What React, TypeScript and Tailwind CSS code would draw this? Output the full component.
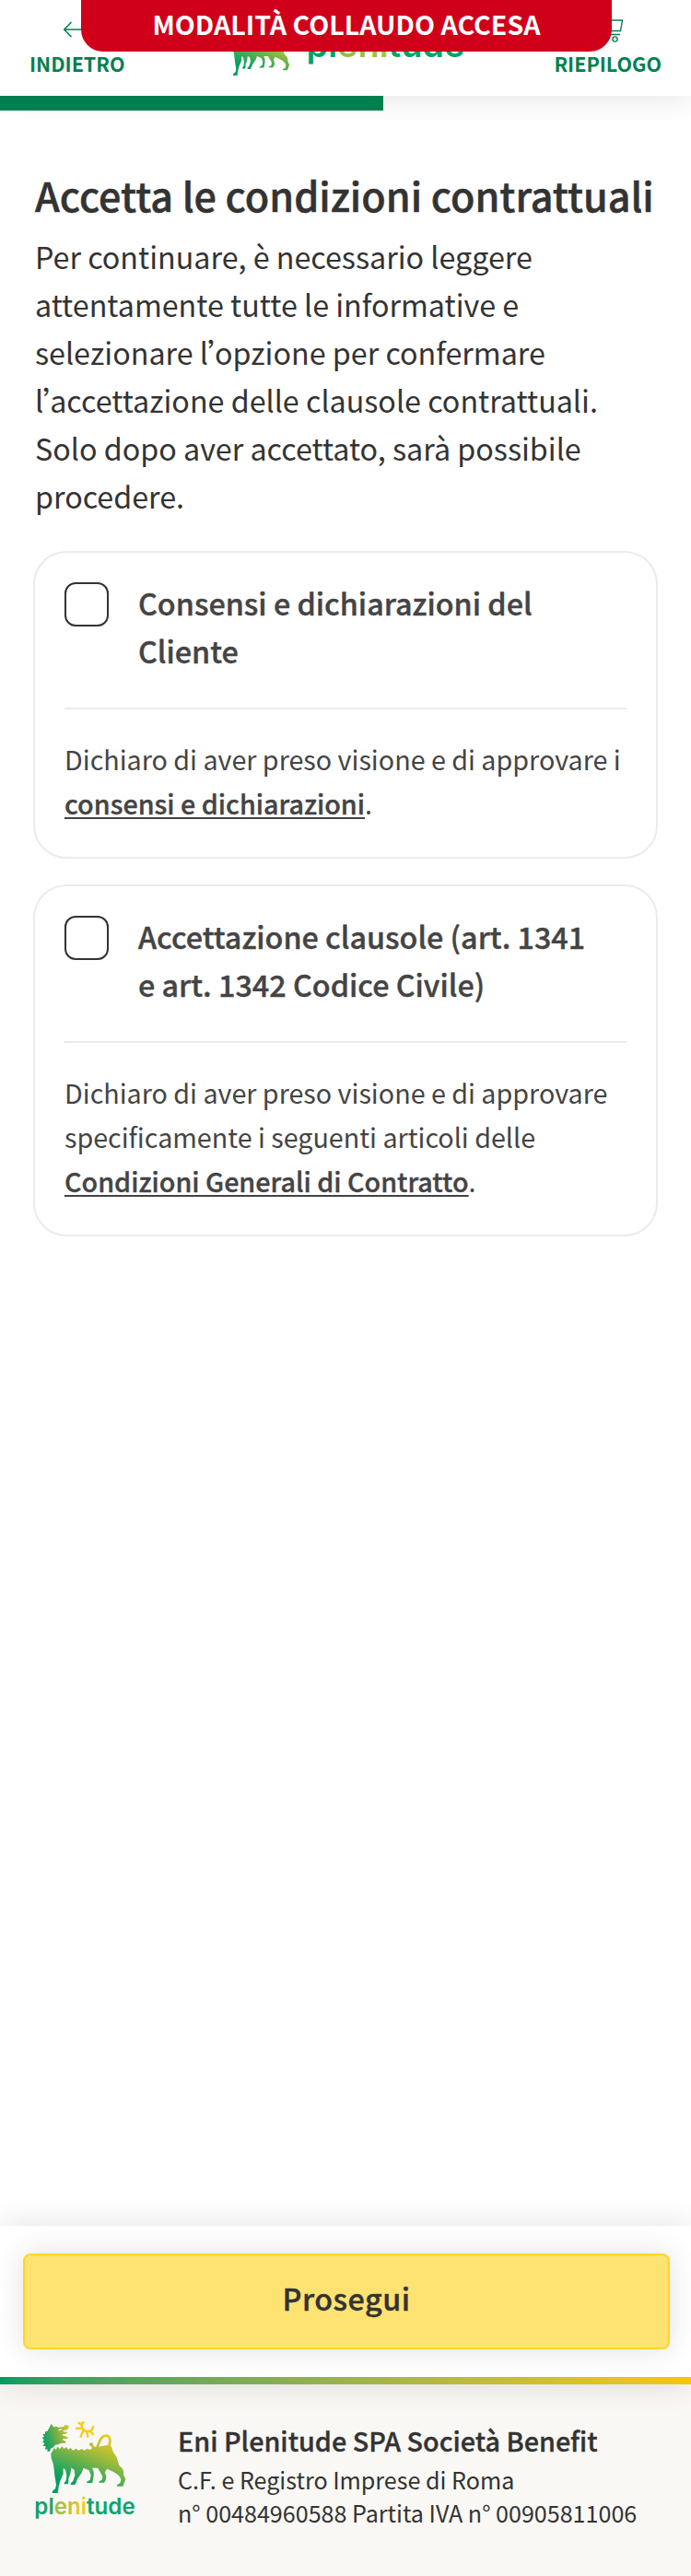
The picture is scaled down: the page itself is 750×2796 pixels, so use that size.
import type { ReactNode } from "react";

function Dog({ id, eye }: { id: string; eye: string }) {
  return (
    <>
      <defs>
        <linearGradient id={id} gradientUnits="userSpaceOnUse" x1="150" y1="250" x2="225" y2="70">
          <stop offset="0" stopColor="#009f64" />
          <stop offset="0.28" stopColor="#45ab55" />
          <stop offset="0.62" stopColor="#a3bb3c" />
          <stop offset="1" stopColor="#f3cb1c" />
        </linearGradient>
        <linearGradient id={id + "-head"} gradientUnits="userSpaceOnUse" x1="88" y1="115" x2="165" y2="90">
          <stop offset="0" stopColor="#18a262" />
          <stop offset="0.45" stopColor="#6cae4b" />
          <stop offset="1" stopColor="#d3c52f" />
        </linearGradient>
      </defs>
      <path
        fill={`url(#${id}-head)`}
        d="M107 62l8 11 9-2 6 3 17-2 5-6 11 2 1 8-5 6-14 2 2 4 13 1-4 6-13 1 3 5 15 5-2 6-14-1-1 4 11 5-2 5-16 1-7 4-10 1-6 8-9 4-2 8-8 3-1-9-7 1 2-10-9-1 5-9-7-5 6-6-8-7 8-3-5-9 8-1 0-8 7 0z"
      />
      <path fill={eye} d="M130 82l10-3 2 3-9 3z" />
      <path
        fill={`url(#${id})`}
        d="M106 158L112 150L116 140L122 147L128 136L134 145L142 136L148 144L156 138L162 147L170 141L178 149L188 143L196 149L206 144L214 149L224 143L232 147L244 140L258 138L290 131L302 135L308 152L320 172L328 198C340 208 344 215 342 228L349 243L340 266H321C320 259 326 259 331 256L334 244C330 230 318 224 305 217L288 209L281 222C287 232 288 238 283 248L279 254H262C262 248 267 248 272 245L274 234L266 219L258 206L240 206C246 216 247 226 244 238L241 255H222C222 249 228 248 233 245L236 230L230 214L212 206L206 222L192 242L187 256L183 261H170C170 254 175 252 178 248L184 230L182 212L172 206L169 226L163 240L163 254L160 259H149C149 253 153 251 155 247L157 230L153 212L146 206L146 225L136 248L131 268L128 288H110C110 280 115 278 120 274L123 262L118 230L114 195L107 175Z"
      />
      <path
        fill="none"
        stroke={`url(#${id})`}
        strokeWidth="8"
        d="M256 141C262 126 266 103 284 101C298 100 302 116 295 134M256 141C248 143 240 138 238 129"
      />
      <circle cx="237" cy="130" r="6" fill="#b4be38" />
      <g fill="none" stroke="#f5cb1e" strokeLinejoin="round">
        <path strokeWidth="8" d="M214 55c-9 6-10 17-4 25 7 8 20 10 28 3" />
        <path strokeWidth="7" d="M206 64l-12-5M206 76l-20 2M211 84l-9 23M222 88l5 19M234 86l11 13M239 84l5-15" />
      </g>
    </>
  );
}

function FooterLogo() {
  return (
    <svg className="h-[108px] w-[109px] shrink-0" viewBox="54 54 327 324">
      <Dog id="footer-dog" eye="#f9f8f4" />
      <defs>
        <linearGradient id="footer-word" gradientUnits="userSpaceOnUse" x1="54" y1="0" x2="378" y2="0">
          <stop offset="0" stopColor="#0aa06a" />
          <stop offset="0.18" stopColor="#22a665" />
          <stop offset="0.19" stopColor="#9abb45" />
          <stop offset="0.33" stopColor="#b9c03c" />
          <stop offset="0.43" stopColor="#dfc931" />
          <stop offset="0.51" stopColor="#f1cd2a" />
          <stop offset="0.515" stopColor="#0ea56c" />
          <stop offset="1" stopColor="#10a36e" />
        </linearGradient>
      </defs>
      <text
        x="52"
        y="357"
        fill="url(#footer-word)"
        className="font-['Inter',sans-serif] text-[73px] font-semibold"
        textLength="328"
        lengthAdjust="spacingAndGlyphs"
      >
        plenitude
      </text>
    </svg>
  );
}

function HeaderLogo() {
  return (
    <svg className="h-[90px] w-[260px]" viewBox="0 0 260 90">
      <g transform="translate(-22.2 8.2) scale(0.256)">
        <Dog id="header-dog" eye="#ffffff" />
      </g>
      <defs>
        <linearGradient id="header-word" gradientUnits="userSpaceOnUse" x1="87" y1="0" x2="257" y2="0">
          <stop offset="0" stopColor="#00a067" />
          <stop offset="0.185" stopColor="#0aa366" />
          <stop offset="0.19" stopColor="#93b949" />
          <stop offset="0.51" stopColor="#b3c038" />
          <stop offset="0.515" stopColor="#0aa366" />
          <stop offset="1" stopColor="#00a067" />
        </linearGradient>
      </defs>
      <text
        x="85.500"
        y="61.500"
        fill="url(#header-word)"
        className="font-['Inter',sans-serif] text-[38px] font-semibold"
        textLength="172"
        lengthAdjust="spacingAndGlyphs"
      >
        plenitude
      </text>
    </svg>
  );
}

function Apostrophe() {
  return <span className="-ml-px inline-block w-2 whitespace-nowrap">’</span>;
}

function ConsentCard({ title, children }: { title: ReactNode; children: ReactNode }) {
  return (
    <section className="rounded-[36px] border-2 border-[#ebebeb] px-8 pt-7 pb-[34px] text-[#444]">
      <label className="flex gap-8 pb-9">
        <span className="mt-1 size-12 shrink-0 rounded-xl border-2 border-[#333]" />
        <span className="text-[32.3px] leading-[52px] font-medium whitespace-nowrap [-webkit-text-stroke:0.4px_#444]">{title}</span>
      </label>
      <div className="h-0.5 bg-[#ebebeb]" />
      <p className="pt-[30px] text-[28.7px] leading-12 whitespace-nowrap">{children}</p>
    </section>
  );
}

function DocumentLink({ children }: { children: ReactNode }) {
  return (
    <a className="font-medium underline decoration-2 underline-offset-[3px] [-webkit-text-stroke:0.35px_#444] [text-decoration-skip-ink:none]">
      {children}
    </a>
  );
}

export default function App() {
  return (
    <div className="relative flex h-[2796px] w-[750px] flex-col overflow-hidden bg-white font-['Noto_Sans_CJK_SC',sans-serif] text-[#333]">
      <header className="relative flex h-[104px] shrink-0 items-start justify-between bg-white px-8 shadow-[0_0_32px_rgba(0,0,0,0.12)]">
        <a className="flex flex-col items-center pt-4 text-[21.5px] leading-6 font-bold text-[#00804f]">
          <svg className="mb-[9px] size-8" viewBox="0 0 32 32" fill="none" stroke="#00804f" strokeWidth="1.6">
            <path d="M31 16H2M9.500 8L1.700 16l7.800 8" />
          </svg>
          INDIETRO
        </a>
        <div className="absolute top-0 left-[247px]">
          <HeaderLogo />
        </div>
        <a className="flex flex-col items-center pt-4 text-[21.5px] leading-6 font-bold text-[#00804f]">
          <svg className="mb-[9px] size-8" viewBox="0 0 32 32" fill="none" stroke="#00804f" strokeWidth="1.4">
            <path d="M1 2h5l5 15.500h18.500L31.500 6H7.500M11 17.500l-2 4h20" />
            <circle cx="12" cy="26.500" r="2.600" />
            <circle cx="23.500" cy="26.500" r="2.600" />
          </svg>
          RIEPILOGO
        </a>
        <div className="absolute top-0 left-[88px] h-14 w-[576px] rounded-b-3xl bg-[#d0001b] text-center text-[28.6px] leading-[52px] font-bold text-white">
          MODALITÀ COLLAUDO ACCESA
        </div>
      </header>
      <div className="relative h-4 w-[416px] shrink-0 bg-[#00804f]" />

      <main className="flex-1 px-9 pt-[61px]">
        <h1 className="pl-0.5 text-[43.1px] leading-[60px] font-medium whitespace-nowrap [-webkit-text-stroke:0.5px_#333]">
          Accetta le condizioni contrattuali
        </h1>
        <p className="mt-[11px] pl-0.5 text-[32.25px] leading-[52px]">
          Per continuare, è necessario leggere
          <br />
          attentamente tutte le informative e
          <br />
          selezionare l<Apostrophe />opzione per confermare
          <br />l<Apostrophe />accettazione delle clausole contrattuali.
          <br />
          Solo dopo aver accettato, sarà possibile
          <br />
          procedere.
        </p>
        <div className="mt-[34px] flex flex-col gap-7">
          <ConsentCard
            title={
              <>
                Consensi e dichiarazioni del
                <br />
                Cliente
              </>
            }
          >
            Dichiaro di aver preso visione e di approvare i
            <br />
            <DocumentLink>consensi e dichiarazioni</DocumentLink>.
          </ConsentCard>
          <ConsentCard
            title={
              <>
                Accettazione clausole (art. 1341
                <br />e art. 1342 Codice Civile)
              </>
            }
          >
            Dichiaro di aver preso visione e di approvare
            <br />
            specificamente i seguenti articoli delle
            <br />
            <DocumentLink>Condizioni Generali di Contratto</DocumentLink>.
          </ConsentCard>
        </div>
      </main>

      <div className="relative shrink-0 bg-white shadow-[0_0_32px_rgba(0,0,0,0.12)]">
        <div className="pt-[30px] pr-[23px] pb-[30px] pl-[25px]">
          <button className="block h-[104px] w-full rounded-lg border-2 border-[#ffd42b] bg-[#ffe372] pb-2 text-[32.3px] font-medium tracking-[0.5px] shadow-[0_0_32px_rgba(0,0,0,0.12)] [-webkit-text-stroke:0.4px_#333]">
            Prosegui
          </button>
        </div>
        <div className="relative h-2 bg-linear-to-r from-[#009b62] to-[#f7c600]" />
      </div>
      <footer className="flex h-[208px] shrink-0 items-start bg-[#f9f8f4] pt-10 pl-[38px]">
        <FooterLogo />
        <div className="mt-[3px] ml-[46px] whitespace-nowrap">
          <p className="text-[28.75px] leading-9 font-medium [-webkit-text-stroke:0.35px_#333]">Eni Plenitude SPA Società Benefit</p>
          <p className="mt-1.5 text-[25.1px] leading-9">
            C.F. e Registro Imprese di Roma
            <br />
            n° 00484960588 Partita IVA n° 00905811006
          </p>
        </div>
      </footer>
    </div>
  );
}
